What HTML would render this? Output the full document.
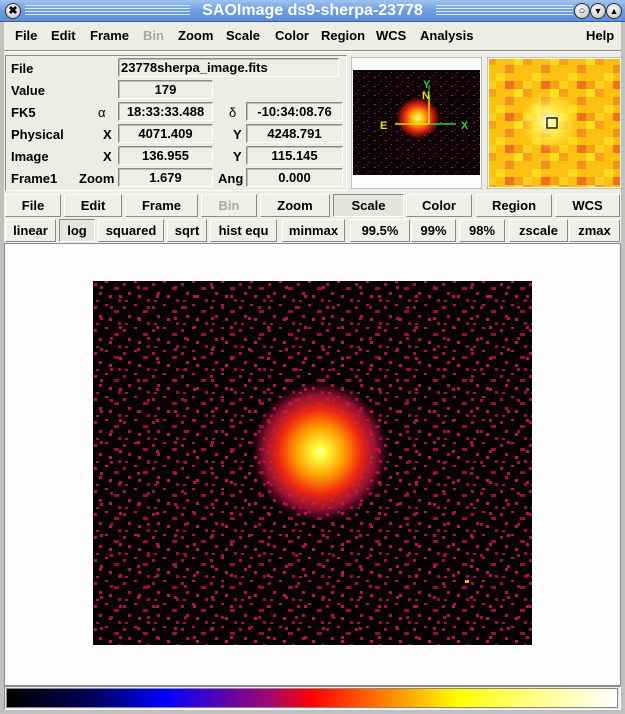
<!DOCTYPE html>
<html><head><meta charset="utf-8"><style>
*{box-sizing:border-box;margin:0;padding:0}
body{width:625px;height:714px;background:#c8c8c8;font-family:"Liberation Sans",sans-serif;font-weight:bold;font-size:13px;color:#000;position:relative;overflow:hidden}
.a{position:absolute}
#title{left:0;top:0;width:625px;height:22px;background:linear-gradient(#9ec3ee,#6f9fe0 50%,#5b8cd6);border-bottom:1px solid #3a5f9a}
#title .lines{position:absolute;top:5px;height:12px;background:repeating-linear-gradient(#dce9fb 0 1px,transparent 1px 3px)}
#title .t{position:absolute;left:0;width:625px;top:2px;text-align:center;color:#fff;font-size:16px;font-family:"Liberation Sans",sans-serif;font-weight:bold}
.circ{position:absolute;top:3px;width:16px;height:16px;border-radius:50%;background:radial-gradient(circle at 40% 35%,#fff,#bbb);border:1px solid #333;font-size:11px;line-height:14px;text-align:center}
#win{left:0;top:22px;width:625px;height:692px;background:#edece6;border-left:4px solid #c0c0c0;border-right:4px solid #c0c0c0;border-bottom:4px solid #c0c0c0}
.m{position:absolute;top:28px}
.lbl{position:absolute}
.box{position:absolute;height:19px;border:1px solid #8a8a88;border-right-color:#fff;border-bottom-color:#fff;background:#efeee9;text-align:center;line-height:17px;box-shadow:inset 1px 1px 0 #bdbcb6}
.btn{position:absolute;height:23px;border:1px solid #fff;border-right-color:#8a8a88;border-bottom-color:#8a8a88;background:#efeee9;text-align:center;line-height:21px}
.sunk{border-color:#8a8a88;border-right-color:#fff;border-bottom-color:#fff;background:#e6e5df}
.dis{color:#a8a8a8}
</style></head><body>
<div class="a" id="title">
 <div class="circ" style="left:5px">✖</div>
 <div class="lines" style="left:25px;width:165px"></div>
 <div class="lines" style="left:436px;width:137px"></div>
 <div class="t">SAOImage ds9-sherpa-23778</div>
 <div class="circ" style="left:574px">○</div>
 <div class="circ" style="left:590px;font-size:9px">▼</div>
 <div class="circ" style="left:606px;font-size:9px">▲</div>
</div>
<div class="a" id="win"></div>
<div class="a" style="left:4px;top:50px;width:617px;height:2px;border-top:1px solid #8a8a88;border-bottom:1px solid #fff"></div>
<div class="m" style="left:15px">File</div>
<div class="m" style="left:51px">Edit</div>
<div class="m" style="left:90px">Frame</div>
<div class="m dis" style="left:143px">Bin</div>
<div class="m" style="left:178px">Zoom</div>
<div class="m" style="left:226px">Scale</div>
<div class="m" style="left:275px">Color</div>
<div class="m" style="left:321px">Region</div>
<div class="m" style="left:376px">WCS</div>
<div class="m" style="left:420px">Analysis</div>
<div class="m" style="left:586px">Help</div>

<div class="a" style="left:5px;top:55px;width:342px;height:136px;border:1px solid #8a8a88;border-right-color:#fff;border-bottom-color:#fff"></div>
<div class="lbl" style="left:11px;top:61px">File</div>
<div class="lbl" style="left:11px;top:83px">Value</div>
<div class="lbl" style="left:11px;top:105px">FK5</div>
<div class="lbl" style="left:11px;top:127px">Physical</div>
<div class="lbl" style="left:11px;top:149px">Image</div>
<div class="lbl" style="left:11px;top:171px">Frame1</div>
<div class="lbl" style="left:98px;top:105px;font-weight:normal">α</div>
<div class="lbl" style="left:103px;top:127px">X</div>
<div class="lbl" style="left:103px;top:149px">X</div>
<div class="lbl" style="left:79px;top:171px">Zoom</div>
<div class="lbl" style="left:229px;top:105px;font-weight:normal">δ</div>
<div class="lbl" style="left:233px;top:127px">Y</div>
<div class="lbl" style="left:233px;top:149px">Y</div>
<div class="lbl" style="left:218px;top:171px">Ang</div>
<div class="box" style="left:118px;top:58px;width:221px;text-align:left;padding-left:2px">23778sherpa_image.fits</div>
<div class="box" style="left:118px;top:80px;width:95px">179</div>
<div class="box" style="left:118px;top:102px;width:95px">18:33:33.488</div>
<div class="box" style="left:118px;top:124px;width:95px">4071.409</div>
<div class="box" style="left:118px;top:146px;width:95px">136.955</div>
<div class="box" style="left:118px;top:168px;width:95px">1.679</div>
<div class="box" style="left:246px;top:102px;width:97px">-10:34:08.76</div>
<div class="box" style="left:246px;top:124px;width:97px">4248.791</div>
<div class="box" style="left:246px;top:146px;width:97px">115.145</div>
<div class="box" style="left:246px;top:168px;width:97px">0.000</div>

<svg class="a" style="left:351px;top:57px" width="131" height="132">
<defs><pattern id="np" width="11" height="9" patternUnits="userSpaceOnUse"><rect width="11" height="9" fill="#0a0205"/><rect x="1" y="2" width="2" height="1" fill="#b0104a"/><rect x="7" y="6" width="1" height="1" fill="#c0144e"/><rect x="5" y="0" width="1" height="1" fill="#a00c44"/></pattern>
<radialGradient id="pb"><stop offset="0" stop-color="#ffff80"/><stop offset=".3" stop-color="#ffb000"/><stop offset=".65" stop-color="#e02010"/><stop offset="1" stop-color="#e02010" stop-opacity="0"/></radialGradient></defs>
<rect width="131" height="132" fill="#fdfdfb" stroke="#8a8a88"/>
<rect x="2" y="13" width="127" height="105" fill="url(#np)"/>
<ellipse cx="67" cy="61" rx="22" ry="21" fill="url(#pb)"/>
<line x1="78" y1="49" x2="78" y2="28" stroke="#30d040" stroke-width="1"/>
<line x1="78" y1="67" x2="105" y2="67" stroke="#30d040" stroke-width="1.5"/>
<line x1="78" y1="67" x2="78" y2="39" stroke="#e8e000" stroke-width="1.5"/>
<line x1="78" y1="67" x2="44" y2="67" stroke="#e8e000" stroke-width="1.5"/>
<text x="29" y="72" fill="#e8e000" font-size="11" font-family="Liberation Sans">E</text>
<text x="71" y="42" fill="#e8e000" font-size="11" font-family="Liberation Sans">N</text>
<text x="110" y="72" fill="#30d040" font-size="11" font-family="Liberation Sans">X</text>
<text x="72" y="31" fill="#30d040" font-size="11" font-family="Liberation Sans">Y</text>
</svg>
<svg class="a" style="left:487px;top:57px" width="135" height="132">
<defs><pattern id="mp" width="36" height="32" patternUnits="userSpaceOnUse"><rect width="36" height="32" fill="#fcc010"/><rect x="0" y="0" width="9" height="8" fill="#f8a018"/><rect x="18" y="8" width="9" height="8" fill="#f09020"/><rect x="9" y="16" width="9" height="8" fill="#fcd820"/><rect x="27" y="24" width="9" height="8" fill="#f8a018"/><rect x="27" y="0" width="9" height="8" fill="#fce020"/><rect x="0" y="24" width="9" height="8" fill="#fcd020"/><rect x="18" y="24" width="9" height="8" fill="#f07020"/></pattern>
<radialGradient id="mb"><stop offset="0" stop-color="#ffffe8"/><stop offset=".4" stop-color="#ffff70" stop-opacity=".7"/><stop offset="1" stop-color="#ffff40" stop-opacity="0"/></radialGradient></defs>
<rect width="135" height="132" fill="#fdfdfb" stroke="#8a8a88"/>
<rect x="2" y="2" width="131" height="128" fill="url(#mp)"/>
<circle cx="62" cy="64" r="30" fill="url(#mb)"/>
<rect x="60" y="61" width="10" height="10" fill="none" stroke="#000" stroke-width="1.3"/>
</svg>

<div class="btn" style="left:5px;top:194px;width:56px">File</div>
<div class="btn" style="left:64px;top:194px;width:58px">Edit</div>
<div class="btn" style="left:125px;top:194px;width:73px">Frame</div>
<div class="btn dis" style="left:201px;top:194px;width:56px">Bin</div>
<div class="btn" style="left:260px;top:194px;width:70px">Zoom</div>
<div class="btn sunk" style="left:333px;top:194px;width:71px">Scale</div>
<div class="btn" style="left:406px;top:194px;width:66px">Color</div>
<div class="btn" style="left:476px;top:194px;width:76px">Region</div>
<div class="btn" style="left:555px;top:194px;width:65px">WCS</div>
<div class="btn" style="left:5px;top:219px;width:51px">linear</div>
<div class="btn sunk" style="left:59px;top:219px;width:36px">log</div>
<div class="btn" style="left:98px;top:219px;width:66px">squared</div>
<div class="btn" style="left:167px;top:219px;width:40px">sqrt</div>
<div class="btn" style="left:210px;top:219px;width:67px">hist equ</div>
<div class="btn" style="left:282px;top:219px;width:63px">minmax</div>
<div class="btn" style="left:350px;top:219px;width:60px">99.5%</div>
<div class="btn" style="left:411px;top:219px;width:45px">99%</div>
<div class="btn" style="left:459px;top:219px;width:46px">98%</div>
<div class="btn" style="left:509px;top:219px;width:59px">zscale</div>
<div class="btn" style="left:569px;top:219px;width:51px">zmax</div>

<div class="a" style="left:4px;top:243px;width:617px;height:443px;background:#fdfefb;border:1px solid #8a8a88"></div>
<svg class="a" style="left:93px;top:281px" width="439" height="364">
<defs><pattern id="bp" width="29" height="23" patternUnits="userSpaceOnUse"><rect width="29" height="23" fill="#060103"/>
<rect x="1" y="2" width="3" height="3" fill="#a80f48"/><rect x="12" y="0" width="3" height="2" fill="#b8144c"/><rect x="21" y="6" width="5" height="3" fill="#9c0a40"/><rect x="6" y="11" width="3" height="3" fill="#b0114a"/><rect x="16" y="14" width="3" height="3" fill="#c0164e"/><rect x="25" y="18" width="3" height="3" fill="#9c0a40"/><rect x="3" y="19" width="3" height="2" fill="#a80f48"/></pattern>
<pattern id="bp2" width="37" height="31" patternUnits="userSpaceOnUse"><rect x="7" y="5" width="3" height="3" fill="#b0124a"/><rect x="26" y="14" width="3" height="3" fill="#b8144c"/><rect x="17" y="25" width="3" height="3" fill="#a00c44"/></pattern>
<radialGradient id="bb"><stop offset="0" stop-color="#ffffd0"/><stop offset=".08" stop-color="#ffff40"/><stop offset=".35" stop-color="#ffa000"/><stop offset=".6" stop-color="#f02810"/><stop offset=".82" stop-color="#c01840" stop-opacity=".75"/><stop offset="1" stop-color="#a00c44" stop-opacity="0"/></radialGradient></defs>
<rect width="439" height="364" fill="url(#bp)"/>
<rect width="439" height="364" fill="url(#bp2)"/>
<ellipse cx="227" cy="171" rx="68" ry="70" fill="url(#bb)"/>
<rect x="372" y="299" width="4" height="3" fill="#ffb000"/>
</svg>

<div class="a" style="left:4px;top:686px;width:617px;height:24px;border:1px solid #8a8a88;border-right-color:#fff;border-bottom-color:#fff;background:#edece6"></div>
<div class="a" style="left:6px;top:688px;width:612px;height:20px;border:1px solid #888;background:linear-gradient(90deg,#000 0%,#000050 13%,#0000ff 26%,#a00870 43%,#ff0000 50%,#ff8000 62%,#ffff00 74%,#ffff80 86%,#ffffff 100%)"></div>
</body></html>
